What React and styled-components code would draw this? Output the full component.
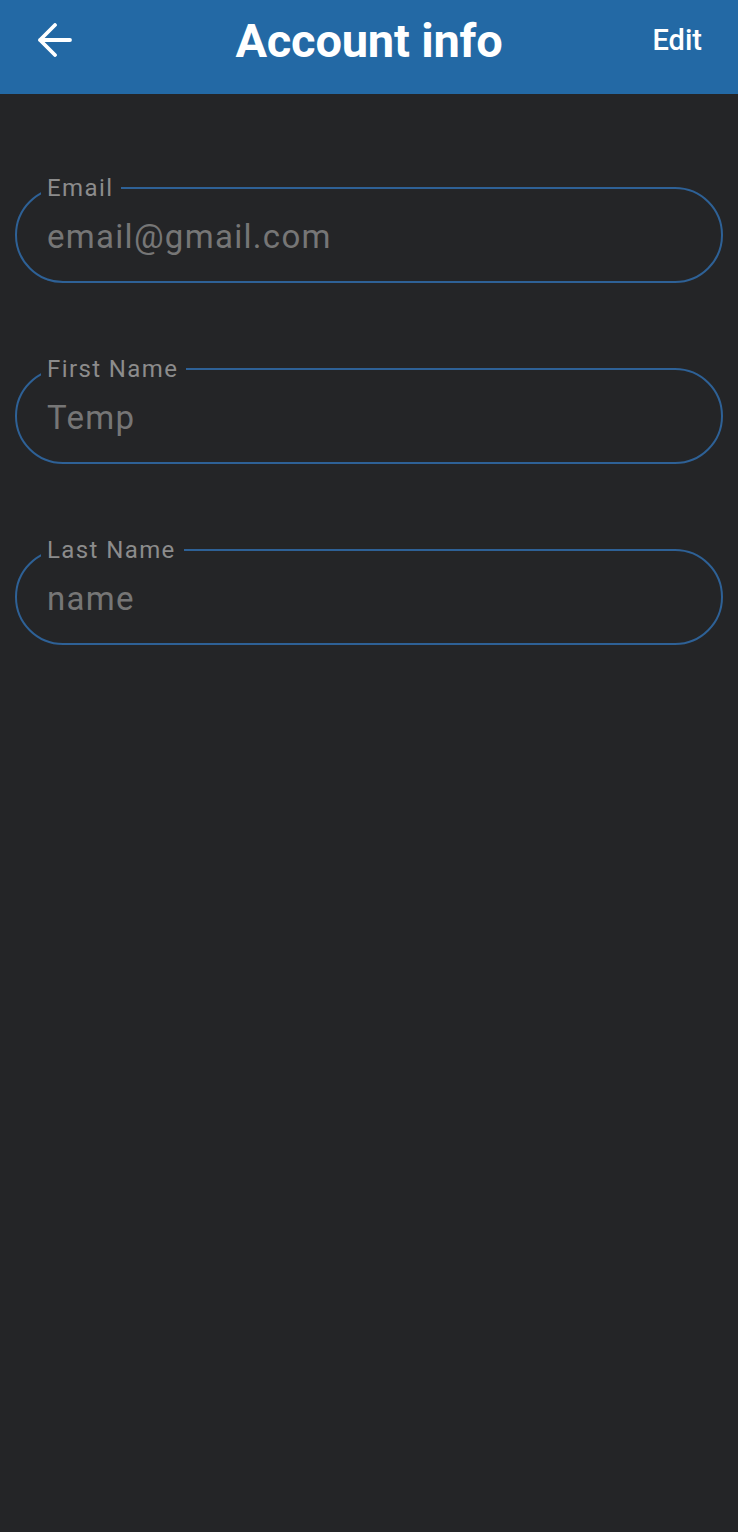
import React from "react";
import styled, { createGlobalStyle } from "styled-components";

const GlobalStyle = createGlobalStyle`
  html, body {
    margin: 0;
    padding: 0;
    background: #242527;
  }
  body {
    font-family: Roboto, "Noto Sans", Arial, sans-serif;
  }
`;

const Screen = styled.div`
  width: 738px;
  min-height: 1532px;
  background: #242527;
  display: flex;
  flex-direction: column;
`;

const Header = styled.header`
  height: 80px;
  padding: 0 36px 14px 36px;
  background: #2369a5;
  display: grid;
  grid-template-columns: 1fr auto 1fr;
  align-items: center;
`;

const BackButton = styled.button`
  justify-self: start;
  background: none;
  border: none;
  padding: 0;
  display: flex;
  cursor: pointer;
`;

const Title = styled.h1`
  margin: 0;
  color: #fff;
  font-size: 47px;
  font-weight: 700;
  letter-spacing: -0.2px;
`;

const EditButton = styled.button`
  justify-self: end;
  background: none;
  border: none;
  padding: 0;
  color: #fff;
  font-family: Roboto, Arial, sans-serif;
  font-size: 29px;
  font-weight: 500;
  cursor: pointer;
`;

const Form = styled.form`
  display: flex;
  flex-direction: column;
  gap: 73px;
  padding: 81px 15px 0 15px;
`;

const Field = styled.fieldset`
  margin: 0;
  border: 2px solid #2e6196;
  border-radius: 48px;
  padding: 0 0 10px 24px;
`;

const Label = styled.legend`
  padding: 0 8px 0 6px;
  font-size: 24px;
  line-height: 26px;
  color: #8c8c8c;
  letter-spacing: 1.4px;
`;

const Value = styled.input`
  display: block;
  width: 100%;
  height: 70px;
  box-sizing: border-box;
  background: transparent;
  border: none;
  outline: none;
  padding: 0 0 0 6px;
  font-family: Roboto, Arial, sans-serif;
  font-size: 33px;
  letter-spacing: 1.3px;
  color: #767676;
`;

const fields = [
  { label: "Email", value: "email@gmail.com" },
  { label: "First Name", value: "Temp" },
  { label: "Last Name", value: "name" },
];

export default function App() {
  return (
    <Screen>
      <GlobalStyle />
      <Header>
        <BackButton aria-label="Back">
          <svg width="36" height="34" viewBox="0 0 36 34" fill="none">
            <path
              d="M34 17H4M19 2L4 17l15 15"
              stroke="#fff"
              strokeWidth="3.8"
              strokeLinecap="round"
              strokeLinejoin="round"
            />
          </svg>
        </BackButton>
        <Title>Account info</Title>
        <EditButton>Edit</EditButton>
      </Header>
      <Form>
        {fields.map((f) => (
          <Field key={f.label}>
            <Label>{f.label}</Label>
            <Value defaultValue={f.value} readOnly />
          </Field>
        ))}
      </Form>
    </Screen>
  );
}
